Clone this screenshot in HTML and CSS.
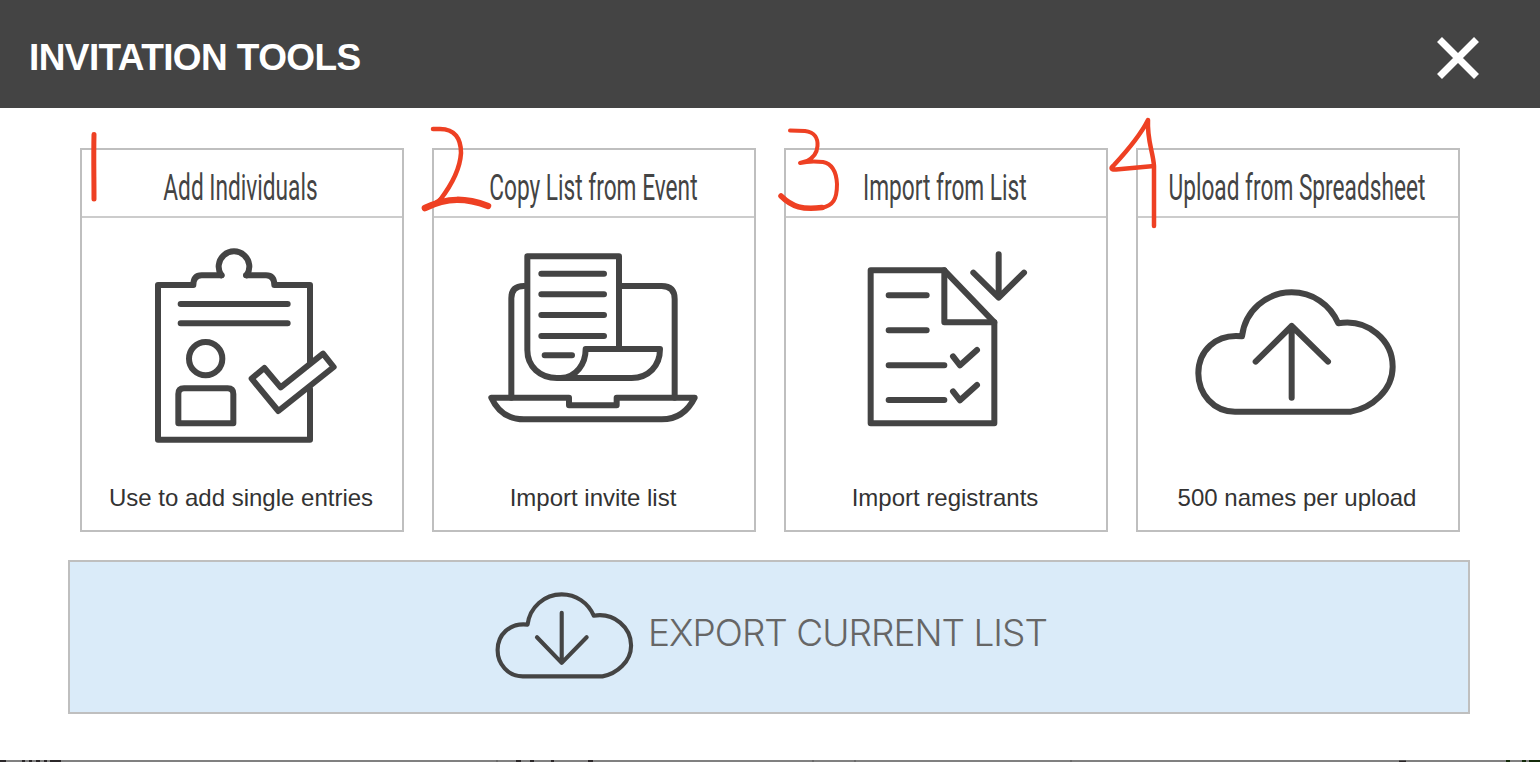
FILE: index.html
```
<!DOCTYPE html>
<html lang="en">
<head>
    <meta charset="UTF-8">
    <meta name="viewport" content="width=device-width, initial-scale=1.0">
    <title>Invitation Tools</title>
    <link rel="stylesheet" href="styles.css">
</head>
<body>

<div class="modal">
    <header class="modal-header">
        <h1>INVITATION TOOLS</h1>
        <button type="button" class="close-btn" aria-label="Close">
            <svg width="44" height="44" viewBox="0 0 44 44"><path d="M3.5 3.5L40.5 40.5M40.5 3.5L3.5 40.5"/></svg>
        </button>
    </header>

    <div class="tools">
        <div class="tool-card">
            <h2><span>Add Individuals</span></h2>
            <svg class="icon" viewBox="-174 -51 960 750">
                <path d="M510 381V150H403Q403 121 378 121H318M245 121H185Q160 121 160 150H54V614H510V462"/>
                <path d="M244 121A46 46 0 1 1 320 121"/>
                <path d="M122 207H443M122 265H443"/>
                <circle cx="197" cy="371" r="50"/>
                <path d="M115 565V477Q115 460 132 460H263Q280 460 280 477V565Z"/>
                <path d="M335 431L373 399L422 457L549 356L581 396L415 528Z"/>
            </svg>
            <p>Use to add single entries</p>
        </div>

        <div class="tool-card">
            <h2><span>Copy List from Event</span></h2>
            <svg class="icon" viewBox="-138 -51 960 750">
                <path d="M94 488V190Q94 153 132 153M424 153H545Q584 153 584 192V488"/>
                <path d="M417 340V64H142V345C142 395 180 429 231 429H455C505 429 540 393 540 342H317C317 386 289 428 242 429"/>
                <path d="M184 116H372M184 178H372M184 240H372M184 303H372M194 361H276"/>
                <path d="M34 488H267V511H410V488H644Q612 553 545 553H132Q64 553 34 488Z"/>
            </svg>
            <p>Import invite list</p>
        </div>

        <div class="tool-card">
            <h2><span>Import from List</span></h2>
            <svg class="icon" viewBox="-192 -51 960 750">
                <path d="M62 106H283L433 262V565H62Z"/>
                <path d="M283 106V262H433"/>
                <path d="M116 181H230M116 286H230M116 391H283M116 495H283"/>
                <path d="M309 364L330 391L381 345M309 469L330 496L381 450"/>
                <path d="M446 58V187M370 113L446 188L522 113"/>
            </svg>
            <p>Import registrants</p>
        </div>

        <div class="tool-card">
            <h2><span>Upload from Spreadsheet</span></h2>
            <svg class="icon" viewBox="-126 -156 960 750">
                <path d="M165 425C100 425 55 371 55 310C55 244 106 190 186 199C195 123 259 67 335 67C397 67 450 103 475 160C565 145 638 212 638 290C638 361 575 414 513 425Z"/>
                <path d="M335 383V168M227 275L335 168L444 275"/>
            </svg>
            <p>500 names per upload</p>
        </div>
    </div>

    <a class="export" href="#">
        <svg class="export-icon" viewBox="0 0 690 480">
            <path d="M165 425C100 425 55 371 55 310C55 244 106 190 186 199C195 123 259 67 335 67C397 67 450 103 475 160C565 145 638 212 638 290C638 361 575 414 513 425Z"/>
            <path d="M335 147V366M227 254L335 366L444 254"/>
        </svg>
        <span>EXPORT CURRENT LIST</span>
    </a>
</div>

<!-- top edge of the page behind the modal -->
<svg class="page-behind" viewBox="0 0 1540 2">
    <path class="behind-text" d="M0 1H6M22 1H25M29 1H32M36 1H40M44 1H47M50 1H61M516 1H521M530 1H534M551 1H554M588 1H593M1399 1.5H1406"/>
    <path class="behind-line" d="M497 0V2M813 0V2M855 0V2M1071 0V2"/>
    <path class="behind-green" d="M1506 1H1510M1522 1H1526M1529 1H1540"/>
</svg>

<!-- step marks drawn over the cards -->
<svg class="marks" viewBox="0 0 1540 240">
    <path d="M94 134.500C93.500 155 94 177 94 199" stroke-width="5"/>
    <path d="M433 129H440C455 129 461 139 461 153C460 170 450 187 440 200" stroke-width="4.5"/>
    <path d="M442 198C437 203 430 206 424 208.500" stroke-width="4.500"/>
    <path d="M425 208C448 197 466 198 488 206" stroke-width="6.5"/>
    <path d="M790 130.500L805 131C815 132 818 139 817.500 146C817 153 813 158 807 161L800 163C808 161 815 161 823 162C833 164 836.500 174 837 184C837 200 833 205 822 208" stroke-width="4"/>
    <path d="M781 196C792 207 803 210 822 207.500" stroke-width="5.5"/>
    <path d="M1154 166L1116 169.500C1111 170 1110 168 1114 165C1127 151 1140 136 1148 120C1147 141 1153 151 1154 166V226" stroke-width="4.5"/>
</svg>

</body>
</html>
```

FILE: styles.css
```
* {
    box-sizing: border-box;
}

body {
    margin: 0;
    height: 762px;
    overflow: hidden;
    background: #808080;
    font-family: "Liberation Sans", Arial, sans-serif;
}

.modal {
    height: 760px;
    background: #fff;
}

.modal-header {
    display: flex;
    justify-content: space-between;
    align-items: center;
    height: 108px;
    padding: 8px 60px 0 29px;
    background: #444;
}

h1 {
    margin: 0;
    color: #fff;
    font-size: 37px;
    letter-spacing: -0.6px;
}

.close-btn {
    display: flex;
    padding: 0;
    border: none;
    background: none;
    cursor: pointer;
}

.close-btn svg {
    stroke: #fff;
    stroke-width: 7;
}

.tools {
    display: grid;
    grid-template-columns: repeat(4, 324px);
    gap: 28px;
    padding: 40px 80px 28px;
}

.tool-card {
    height: 384px;
    border: 2px solid #bfbfbf;
    text-align: center;
}

h2 {
    display: flex;
    justify-content: center;
    height: 68px;
    margin: 0;
    padding-top: 17px;
    border-bottom: 2px solid #ccc;
    color: #444;
    font-family: Roboto, sans-serif;
    font-size: 36px;
    font-weight: 450;
    line-height: 42px;
    white-space: nowrap;
}

/* condensed titles */
h2 span {
    transform: translateX(-1px) scaleX(0.63);
}

.icon {
    display: block;
    width: 320px;
    height: 250px;
}

.icon, .export-icon {
    fill: none;
    stroke: #444;
    stroke-width: 18;
    stroke-linecap: round;
    stroke-linejoin: round;
}

.tool-card p {
    margin: 0;
    padding: 16px 2px 0 0;
    color: #333;
    font-size: 24px;
    line-height: 28px;
}

.export {
    display: flex;
    justify-content: center;
    width: 1402px;
    height: 154px;
    margin-left: 68px;
    padding: 17px 6px 0 0;
    border: 2px solid #bfbfbf;
    background: #daebf9;
    color: #666;
    font-family: Inter, sans-serif;
    font-size: 37px;
    font-weight: 300;
    line-height: 44px;
    letter-spacing: -1px;
    text-decoration: none;
}

.export-icon {
    width: 158px;
    height: 110px;
}

.export span {
    padding: 32px 0 0 5px;
}

.page-behind {
    display: block;
    width: 1540px;
    height: 2px;
    stroke-width: 2;
}

.behind-text {
    stroke: #2b2729;
}

.behind-line {
    stroke: #6b6b6b;
}

.behind-green {
    stroke: #142b0a;
}

.marks {
    position: absolute;
    top: 0;
    left: 0;
    width: 1540px;
    height: 240px;
    fill: none;
    stroke: #ee4023;
    stroke-linecap: round;
    stroke-linejoin: round;
    pointer-events: none;
}
```
